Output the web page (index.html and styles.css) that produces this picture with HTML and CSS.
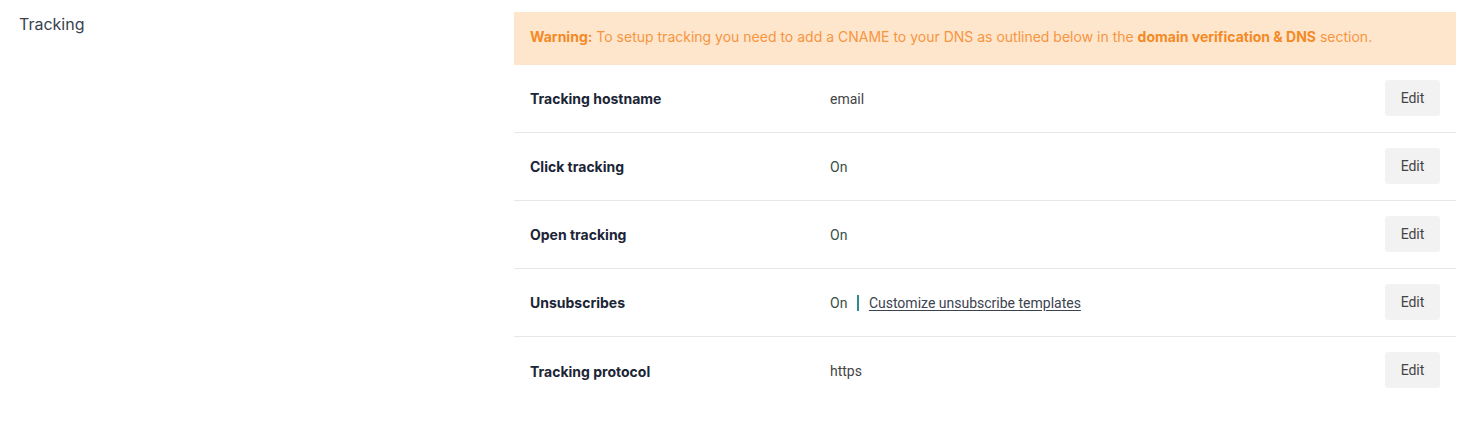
FILE: index.html
```html
<!DOCTYPE html>
<html>
<head>
<meta charset="utf-8">
<link rel="stylesheet" href="styles.css">
</head>
<body>
<div class="page">
  <div class="side">Tracking</div>
  <div class="main">
    <div class="warning"><strong>Warning:</strong> To setup tracking you need to add a CNAME to your DNS as outlined below in the <strong>domain verification &amp; DNS</strong> section.</div>
    <div class="row">
      <div class="label">Tracking hostname</div>
      <div class="value">email</div>
      <button class="edit">Edit</button>
    </div>
    <div class="row">
      <div class="label">Click tracking</div>
      <div class="value on">On</div>
      <button class="edit">Edit</button>
    </div>
    <div class="row">
      <div class="label">Open tracking</div>
      <div class="value on">On</div>
      <button class="edit">Edit</button>
    </div>
    <div class="row">
      <div class="label">Unsubscribes</div>
      <div class="value"><span class="on">On</span><span class="sep"></span><a class="link" href="#">Customize unsubscribe templates</a></div>
      <button class="edit">Edit</button>
    </div>
    <div class="row last">
      <div class="label">Tracking protocol</div>
      <div class="value">https</div>
      <button class="edit">Edit</button>
    </div>
  </div>
</div>
</body>
</html>
```
FILE: styles.css
```css
html, body { margin: 0; padding: 0; background: #fff; }
body { font-family: Inter, "Noto Sans", sans-serif; }
.page { display: flex; padding: 12px 22px 0 19px; }
.side { width: 495px; flex: none; font-size: 16px; color: #3b3f50; padding-top: 2px; line-height: 20px; }
.main { flex: 1; }
.warning {
  background: #fee6cd;
  color: #f7953e;
  font-size: 14px;
  line-height: 20px;
  padding: 15px 16px 18px 16px;
}
.warning strong { font-weight: 700; color: #f48a25; }
.row {
  display: flex;
  align-items: center;
  height: 67px;
  border-bottom: 1px solid #e6e6e6;
  padding: 0 16px;
}
.row.last { border-bottom: none; height: 68px; }
.label { width: 300px; flex: none; font-size: 14px; font-weight: 700; color: #1b2536; }
.value { flex: 1; display: flex; align-items: center; font-family: Roboto, sans-serif; font-size: 14px; color: #444444; }
.on { color: #3a5046; }
.sep { display: inline-block; width: 1.5px; height: 16px; background: #2f8a98; margin: 0 10px 0 10px; }
.link { color: #3b4250; text-decoration: underline; text-underline-offset: 2px; }
.edit {
  font-family: Roboto, sans-serif;
  font-size: 14px;
  color: #444;
  background: #f2f2f2;
  border: none;
  border-radius: 3px;
  width: 55px;
  height: 36px;
  padding: 0;
  margin-top: -2px;
}
```
